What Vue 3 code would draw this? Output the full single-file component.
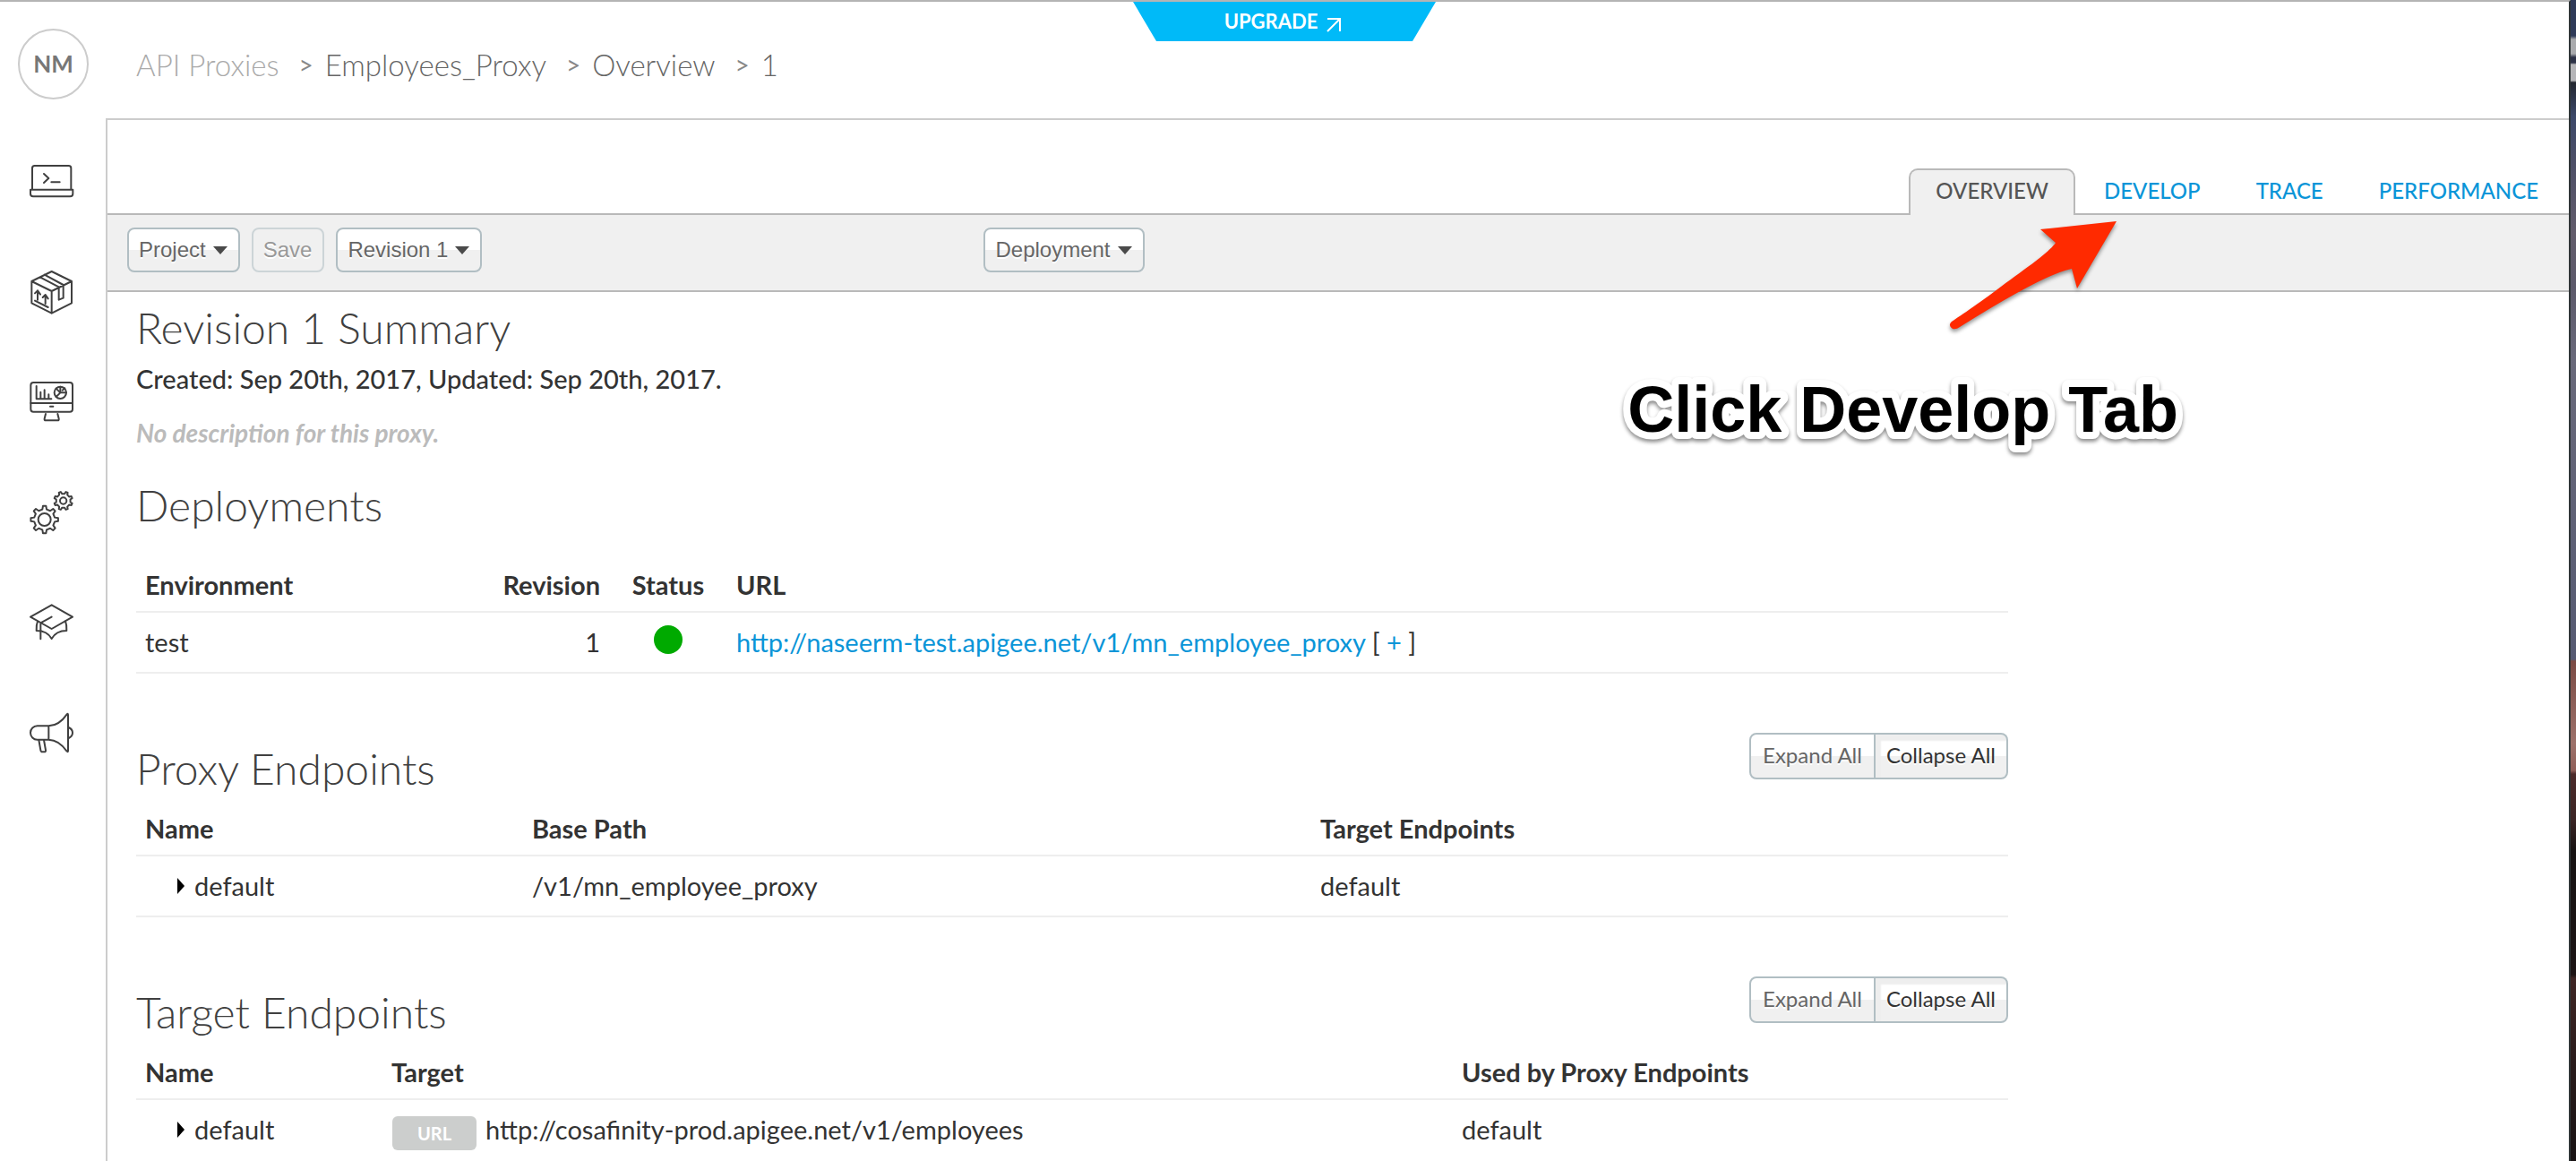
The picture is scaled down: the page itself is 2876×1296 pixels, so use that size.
<script setup>
const breadcrumbs = [
  { label: 'API Proxies', muted: true },
  { label: 'Employees_Proxy' },
  { label: 'Overview' },
  { label: '1' },
]

const tabs = [
  { label: 'OVERVIEW', active: true },
  { label: 'DEVELOP' },
  { label: 'TRACE' },
  { label: 'PERFORMANCE' },
]

// Builds the outline of a cog with evenly spaced, slightly tapered teeth.
function gearPath(cx, cy, outer, inner, teeth, offset) {
  const step = (Math.PI * 2) / teeth
  const points = []
  for (let i = 0; i < teeth; i++) {
    const a = i * step + offset
    const corners = [
      [inner, -0.26],
      [outer, -0.14],
      [outer, 0.14],
      [inner, 0.26],
    ]
    for (const [r, k] of corners) {
      const t = a + k * step
      points.push(`${(cx + r * Math.cos(t)).toFixed(1)} ${(cy + r * Math.sin(t)).toFixed(1)}`)
    }
  }
  return `M${points.join('L')}Z`
}

const bigGear = gearPath(50, 102, 46, 35, 8, 0)
const smallGear = gearPath(113, 39, 31, 24, 8, Math.PI / 8)
</script>

<template>
  <div class="screen">
    <div class="window">
      <a class="upgrade" href="#">
        <span>UPGRADE</span>
        <svg class="upgrade-icon" viewBox="0 0 16 16" aria-hidden="true">
          <path d="M1 15 15 1M1 1h14v14" />
        </svg>
      </a>

      <aside class="sidebar">
        <a class="avatar" href="#">NM</a>
        <nav class="nav" aria-label="Main">
          <a href="#" aria-label="APIs">
            <svg viewBox="0 0 150 150">
              <path d="M9 104V32q0-8 8-8h114q8 0 8 8v72M3 104h142v14q0 9-9 9H12q-9 0-9-9zM48 51l16 15-16 15M73 79h28" />
            </svg>
          </a>
          <a href="#" aria-label="Publish">
            <svg viewBox="0 0 150 150">
              <path d="M74 9l67 33v73l-67 34-67-34V42zM7 42l67 33 67-33M74 75v74M50 20l63 34v44l-15 6V61L35 28" />
              <path d="M27 104V73M18 82l9-9 9 13M53 117V87M44 96l9-9 9 13M18 107l44 22" />
            </svg>
          </a>
          <a href="#" aria-label="Analyze">
            <svg viewBox="0 0 150 150">
              <rect x="4" y="12" width="140" height="98" rx="9" />
              <path d="M4 81h140M69 92h10M54 117l-4 16q-1 6 4 6h40q5 0 4-6l-4-16" />
              <path d="M23 24v43h50M37 67V44M50 67V37M64 67V52" />
              <circle cx="103" cy="46" r="20" />
              <path d="M103 26v20h20M103 46L89 32M103 46L89 60M110 38l8-7" />
            </svg>
          </a>
          <a href="#" aria-label="Admin">
            <svg viewBox="0 0 150 150">
              <path :d="bigGear" />
              <circle cx="50" cy="102" r="21" />
              <path :d="smallGear" />
              <circle cx="113" cy="39" r="11" />
            </svg>
          </a>
          <a href="#" aria-label="Learn">
            <svg viewBox="0 0 150 150">
              <path d="M74 19l70 40-70 40L3 59zM74 59L37 79v54" />
              <path d="M27 74q-5 12-4 31 36 0 51 27 15-27 50-27 1-19-4-32" />
            </svg>
          </a>
          <a href="#" aria-label="Announcements">
            <svg viewBox="0 0 150 150">
              <path d="M64 55H26a23 23 0 0 0 0 46h38zM64 55q35-1 61-39 4-4 4 2v120q0 6-4 2-26-38-61-39M131 60q13 6 13 18t-13 18" />
              <path d="M31 102l6 34q1 6 6 6h6q6 0 5-6l-6-34" />
            </svg>
          </a>
        </nav>
      </aside>

      <div class="page">
        <nav class="breadcrumbs" aria-label="Breadcrumb">
          <template v-for="(crumb, i) in breadcrumbs" :key="crumb.label">
            <span v-if="i" class="separator">&gt;</span>
            <a href="#" :class="{ muted: crumb.muted }">{{ crumb.label }}</a>
          </template>
        </nav>

        <main class="panel">
          <nav class="tabs" aria-label="Proxy views">
            <a v-for="tab in tabs" :key="tab.label" href="#" class="tab" :class="{ active: tab.active }">{{ tab.label }}</a>
          </nav>

          <div class="toolbar">
            <div class="tools">
              <button type="button" class="button">Project<i class="caret"></i></button>
              <button type="button" class="button" disabled>Save</button>
              <button type="button" class="button">Revision 1<i class="caret"></i></button>
            </div>
            <button type="button" class="button">Deployment<i class="caret"></i></button>
          </div>

          <div class="content">
            <section class="summary">
              <h2>Revision 1 Summary</h2>
              <p class="dates">Created: Sep 20th, 2017, Updated: Sep 20th, 2017.</p>
              <p class="description">No description for this proxy.</p>
            </section>

            <section class="deployments">
              <h2>Deployments</h2>
              <table>
                <colgroup>
                  <col class="environment-col" />
                  <col class="revision-col" />
                  <col class="status-col" />
                  <col />
                </colgroup>
                <thead>
                  <tr>
                    <th>Environment</th>
                    <th class="right">Revision</th>
                    <th class="center">Status</th>
                    <th>URL</th>
                  </tr>
                </thead>
                <tbody>
                  <tr>
                    <td>test</td>
                    <td class="right">1</td>
                    <td class="center"><span class="status" role="img" aria-label="Deployed"></span></td>
                    <td><a href="#">http://naseerm-test.apigee.net/v1/mn_employee_proxy</a> [ <a href="#">+</a> ]</td>
                  </tr>
                </tbody>
              </table>
            </section>

            <section class="endpoints">
              <div class="section-head">
                <h2>Proxy Endpoints</h2>
                <div class="group">
                  <button type="button">Expand All</button>
                  <button type="button" class="pressed">Collapse All</button>
                </div>
              </div>
              <table>
                <colgroup>
                  <col class="proxy-name-col" />
                  <col class="path-col" />
                  <col />
                </colgroup>
                <thead>
                  <tr><th>Name</th><th>Base Path</th><th>Target Endpoints</th></tr>
                </thead>
                <tbody>
                  <tr>
                    <td class="expandable">default</td>
                    <td>/v1/mn_employee_proxy</td>
                    <td>default</td>
                  </tr>
                </tbody>
              </table>
            </section>

            <section class="endpoints">
              <div class="section-head">
                <h2>Target Endpoints</h2>
                <div class="group">
                  <button type="button">Expand All</button>
                  <button type="button" class="pressed">Collapse All</button>
                </div>
              </div>
              <table>
                <colgroup>
                  <col class="target-name-col" />
                  <col class="target-col" />
                  <col />
                </colgroup>
                <thead>
                  <tr><th>Name</th><th>Target</th><th>Used by Proxy Endpoints</th></tr>
                </thead>
                <tbody>
                  <tr>
                    <td class="expandable">default</td>
                    <td>
                      <div class="target"><span class="badge">URL</span>http://cosafinity-prod.apigee.net/v1/employees</div>
                    </td>
                    <td>default</td>
                  </tr>
                </tbody>
              </table>
            </section>
          </div>
        </main>
      </div>
    </div>

    <div class="desktop"></div>

    <svg class="pointer" viewBox="0 0 200 136" aria-hidden="true">
      <path d="M193 7 108 16 125 31C117 43 85 64 60 83S10 118 8 120Q5 124 10 127Q14 128 18 125Q112 66 143 60L149 82Z" />
    </svg>
    <svg class="callout" viewBox="0 0 624 104">
      <text x="624" y="66" text-anchor="end">Click Develop Tab</text>
    </svg>
  </div>
</template>

<style>
body {
  margin: 0;
  background: #fff;
}
</style>

<style scoped>
.screen {
  position: relative;
  display: flex;
  height: 100vh;
  overflow: hidden;
  font-family: Lato, sans-serif;
  font-size: 29px;
  line-height: 40px;
  color: #333;
}

a {
  color: #0a95d8;
  text-decoration: none;
}

h2,
p {
  margin: 0;
}

.window {
  position: relative;
  flex: 1;
  display: flex;
  min-width: 0;
  box-sizing: border-box;
  border-top: 2px solid #b4b4b4;
  border-right: 2px solid #303638;
}

.desktop {
  width: 6px;
  background: linear-gradient(
    #2f3a58 0 40px,
    #a9aaad 44px 60px,
    #2c3146 64px 70px,
    #b5b5b8 72px 90px,
    #22262f 92px,
    #3c4869 130px,
    #4d4f67 180px,
    #625c6b 260px,
    #5c596a 320px,
    #69697a 400px,
    #565a72 736px,
    #7b4b45 738px,
    #9c716a 830px,
    #8f5f59 860px,
    #4c2b2b 864px,
    #3b2525 915px,
    #171313 950px,
    #1c1415 1088px,
    #3f2625 1092px,
    #2b1c1c 1180px,
    #191314 1296px
  );
}

.upgrade {
  position: absolute;
  top: 0;
  left: 50%;
  transform: translateX(-50%);
  display: flex;
  align-items: center;
  justify-content: center;
  gap: 10px;
  width: 338px;
  height: 44px;
  clip-path: polygon(0 0, 100% 0, 312px 100%, 26px 100%);
  background: #00baf8;
  color: #fff;
  font-size: 22px;
  font-weight: 700;
}

.upgrade-icon {
  width: 16px;
  height: 16px;
  margin: 8px 4px 0 0;
  fill: none;
  stroke: #fff;
  stroke-width: 2;
}

.sidebar {
  display: flex;
  flex-direction: column;
  width: 118px;
}

.avatar {
  display: flex;
  align-items: center;
  justify-content: center;
  width: 79px;
  height: 79px;
  box-sizing: border-box;
  margin: 30px 0 0 20px;
  padding-bottom: 2px;
  border: 2px solid #ccc;
  border-radius: 50%;
  color: #777;
  font-size: 26px;
  font-weight: 700;
}

.nav {
  display: flex;
  flex-direction: column;
  gap: 73px;
  margin: 66px 0 0 33px;
}

.nav a {
  height: 50px;
}

.nav svg {
  display: block;
  width: 50px;
  height: 50px;
  overflow: visible;
  fill: none;
  stroke: #404040;
  stroke-width: 6;
  stroke-linejoin: round;
  stroke-linecap: round;
}

.page {
  flex: 1;
  display: flex;
  flex-direction: column;
  min-width: 0;
}

.breadcrumbs {
  display: flex;
  align-items: flex-start;
  height: 130px;
  box-sizing: border-box;
  padding: 50px 34px 0;
  font-size: 33px;
  font-weight: 300;
}

.breadcrumbs a {
  color: #666;
}

.breadcrumbs .muted {
  color: #aaa;
}

.separator {
  margin: 0 13px 0 22px;
  color: #888;
  font-size: 28px;
  font-weight: 400;
}

.panel {
  flex: 1;
  min-height: 0;
  border-top: 2px solid #ccc;
  border-left: 2px solid #ccc;
}

.tabs {
  display: flex;
  align-items: flex-end;
  justify-content: flex-end;
  gap: 2px;
  height: 104px;
  padding-right: 4px;
  border-bottom: 2px solid #b9b9b9;
}

.tab {
  box-sizing: border-box;
  height: 52px;
  margin-bottom: -2px;
  padding: 8px 28px 0;
  border: 2px solid transparent;
  border-bottom: 0;
  font-size: 24px;
  font-weight: 500;
  line-height: 30px;
}

.tab.active {
  border-color: #b9b9b9;
  border-radius: 10px 10px 0 0;
  background: #f0f0f0;
  color: #555;
}

.toolbar {
  display: flex;
  gap: 560px;
  padding: 14px 22px 20px;
  border-bottom: 2px solid #b9b9b9;
  background: #f0f0f0;
}

.tools {
  display: flex;
  gap: 13px;
}

.button {
  display: flex;
  align-items: center;
  gap: 8px;
  height: 50px;
  box-sizing: border-box;
  padding: 0 12px 0 11px;
  border: 2px solid #b1bec3;
  border-radius: 8px;
  background: linear-gradient(#fff 50%, #f0f0f0 50%);
  color: #666;
  font-family: "Liberation Sans", Arial, sans-serif;
  font-size: 24px;
  text-shadow: 0 2px 0 #fff;
}

.button:disabled {
  border-color: #ccd4d7;
  background: #f0f0f0;
  color: #999;
}

.caret {
  border: 8px solid transparent;
  border-top: 9px solid #4a4a4a;
  border-bottom: 0;
}

.content {
  max-width: 2090px;
  padding: 10px 32px 0;
}

h2 {
  color: #404040;
  font-size: 48px;
  font-weight: 300;
  line-height: 60px;
}

.dates {
  margin-top: 7px;
  font-weight: 500;
}

.description {
  margin-top: 20px;
  color: #bbb;
  font-size: 28px;
  font-style: italic;
  font-weight: 700;
}

.deployments {
  margin-top: 31px;
}

.deployments table {
  margin-top: 39px;
}

.endpoints {
  margin-top: 66px;
}

.endpoints h2 {
  padding-top: 10px;
}

.section-head {
  display: flex;
  align-items: flex-start;
  justify-content: space-between;
}

.group {
  display: flex;
}

.group button {
  height: 52px;
  box-sizing: border-box;
  padding: 0 13px 4px;
  border: 2px solid #b1bec3;
  border-radius: 8px 0 0 8px;
  background: linear-gradient(#fff 50%, #f0f0f0 50%);
  color: #666;
  font-family: inherit;
  font-size: 24px;
  text-shadow: 0 2px 0 #fff;
}

.group .pressed {
  padding: 0 12px 4px;
  border-left: 0;
  border-radius: 0 8px 8px 0;
  box-shadow: inset 6px 7px 2px #eee;
  color: #333;
}

table {
  width: 100%;
  table-layout: fixed;
  border-collapse: separate;
  border-spacing: 0;
}

.endpoints table {
  margin-top: 17px;
}

th {
  padding: 0 10px 9px;
  border-bottom: 2px solid #eee;
  font-weight: 700;
  text-align: left;
}

td {
  height: 40px;
  padding: 13px 10px;
  border-bottom: 2px solid #eee;
  vertical-align: top;
}

.right {
  text-align: right;
}

.center {
  text-align: center;
}

.environment-col { width: 380px; }
.revision-col { width: 148px; }
.status-col { width: 132px; }
.proxy-name-col { width: 432px; }
.path-col { width: 880px; }
.target-name-col { width: 275px; }
.target-col { width: 1195px; }

.status {
  display: block;
  width: 32px;
  height: 32px;
  margin: 1px auto 0;
  border-radius: 50%;
  background: #0a0;
}

.expandable::before {
  content: "";
  display: inline-block;
  margin: 0 11px 0 36px;
  border: 9px solid transparent;
  border-left: 8px solid #000;
  border-right: 0;
  vertical-align: 2px;
}

.target {
  display: flex;
  gap: 10px;
  padding-bottom: 4px;
}

.badge {
  height: 38px;
  margin: 5px 0 -3px 1px;
  padding: 0 28px;
  border-radius: 6px;
  background: #cccecd;
  color: #fff;
  font-size: 20px;
  font-weight: 700;
  line-height: 38px;
}

.pointer {
  position: absolute;
  top: 240px;
  right: 506px;
  width: 200px;
  height: 136px;
  fill: #ff2a00;
  filter: drop-shadow(0 3px 2px rgba(0, 0, 0, 0.4));
}

.callout {
  position: absolute;
  top: 416px;
  right: 444px;
  width: 624px;
  height: 104px;
  overflow: visible;
  fill: #000;
  stroke: #fff;
  stroke-width: 16px;
  stroke-linejoin: round;
  paint-order: stroke fill;
  font-family: "Liberation Sans", Arial, sans-serif;
  font-size: 72px;
  font-weight: 700;
  filter: drop-shadow(0 3px 2px rgba(0, 0, 0, 0.45));
}
</style>
